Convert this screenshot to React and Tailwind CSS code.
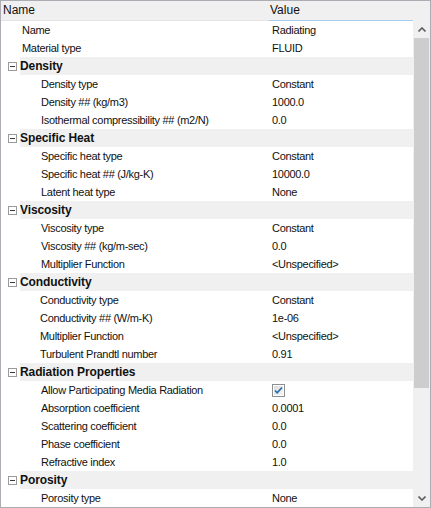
import React from 'react';

const rows = [
  { label: 'Name', value: 'Radiating', indent: 'top' },
  { label: 'Material type', value: 'FLUID', indent: 'top' },
  { cat: 'Density' },
  { label: 'Density type', value: 'Constant' },
  { label: 'Density ## (kg/m3)', value: '1000.0' },
  { label: 'Isothermal compressibility ## (m2/N)', value: '0.0' },
  { cat: 'Specific Heat' },
  { label: 'Specific heat type', value: 'Constant' },
  { label: 'Specific heat ## (J/kg-K)', value: '10000.0' },
  { label: 'Latent heat type', value: 'None' },
  { cat: 'Viscosity' },
  { label: 'Viscosity type', value: 'Constant' },
  { label: 'Viscosity ## (kg/m-sec)', value: '0.0' },
  { label: 'Multiplier Function', value: '<Unspecified>' },
  { cat: 'Conductivity' },
  { label: 'Conductivity type', value: 'Constant', tight: true },
  { label: 'Conductivity ## (W/m-K)', value: '1e-06', tight: true },
  { label: 'Multiplier Function', value: '<Unspecified>', tight: true },
  { label: 'Turbulent Prandtl number', value: '0.91', tight: true },
  { cat: 'Radiation Properties' },
  { label: 'Allow Participating Media Radiation', check: true },
  { label: 'Absorption coefficient', value: '0.0001' },
  { label: 'Scattering coefficient', value: '0.0' },
  { label: 'Phase coefficient', value: '0.0' },
  { label: 'Refractive index', value: '1.0' },
  { cat: 'Porosity' },
  { label: 'Porosity type', value: 'None' },
];

function MinusBox() {
  return (
    <svg width="9" height="9" viewBox="0 0 9 9" className="block">
      <rect x="0.5" y="0.5" width="8" height="8" fill="#fff" stroke="#9a9a9a" />
      <rect x="2" y="4" width="5" height="1" fill="#3a3a3a" />
    </svg>
  );
}

function CheckBox() {
  return (
    <svg width="13" height="13" viewBox="0 0 13 13" className="block">
      <defs>
        <linearGradient id="cb" x1="0" y1="0" x2="1" y2="1">
          <stop offset="0" stopColor="#dcdcdc" />
          <stop offset="1" stopColor="#f6f6f6" />
        </linearGradient>
      </defs>
      <rect x="0.5" y="0.5" width="12" height="12" fill="#fff" stroke="#8e8f8f" />
      <rect x="2" y="2" width="9" height="9" fill="url(#cb)" />
      <path d="M3 6.5 L5.2 8.8 L10 3.5" fill="none" stroke="#2a6fb0" strokeWidth="1.8" />
    </svg>
  );
}

function Row({ r }) {
  if (r.cat) {
    return (
      <div className="flex h-[18px]">
        <div className="w-[19px] flex items-center justify-center pl-[3px] pt-[1px]">
          <MinusBox />
        </div>
        <div className="flex-1 bg-[#f0f0f0] text-[12px] leading-[18px] font-bold tracking-[-0.1px] text-[#111]">
          {r.cat}
        </div>
      </div>
    );
  }
  const pad = r.indent === 'top' ? 'pl-[21px]' : r.tight ? 'pl-[39px]' : 'pl-[40px]';
  return (
    <div className="flex h-[18px] text-[11px] leading-[18px] tracking-[-0.3px] text-[#111]">
      <div className={`w-[270px] shrink-0 ${pad} whitespace-nowrap`}>{r.label}</div>
      <div className="flex-1 pl-[1px] flex items-center">
        {r.check ? <CheckBox /> : r.value}
      </div>
    </div>
  );
}

export default function App() {
  return (
    <div
      className="w-[431px] h-[508px] border border-[#abadb3] bg-white flex flex-col overflow-hidden"
      style={{ fontFamily: '"Liberation Sans", Arial, sans-serif' }}
    >
      {/* Header */}
      <div className="h-[20px] shrink-0 bg-[#f0f0f0] flex text-[12px] leading-[19px] text-[#111]">
        <div className="w-[268px] border-b border-[#e3e3e3] pl-[2px]">Name</div>
        <div className="w-[144px] border-b border-[#a9cdf0] pl-[1px]">Value</div>
        <div className="flex-1" />
      </div>

      {/* Body */}
      <div className="flex flex-1 min-h-0">
        <div className="flex-1 flex flex-col">
          {rows.map((r, i) => (
            <Row key={i} r={r} />
          ))}
        </div>

        {/* Scrollbar */}
        <div className="w-[17px] shrink-0 bg-[#f0f0f0] flex flex-col">
          <div className="h-[17px] flex items-center justify-center">
            <svg width="8" height="5" viewBox="0 0 8 5">
              <path d="M0.5 4.5 L4 1 L7.5 4.5" fill="none" stroke="#606060" strokeWidth="1.6" />
            </svg>
          </div>
          <div className="h-[350px] mx-[1px] bg-[#cdcdcd]" />
          <div className="flex-1" />
          <div className="h-[17px] flex items-center justify-center">
            <svg width="8" height="5" viewBox="0 0 8 5">
              <path d="M0.5 0.5 L4 4 L7.5 0.5" fill="none" stroke="#606060" strokeWidth="1.6" />
            </svg>
          </div>
        </div>
      </div>
    </div>
  );
}
